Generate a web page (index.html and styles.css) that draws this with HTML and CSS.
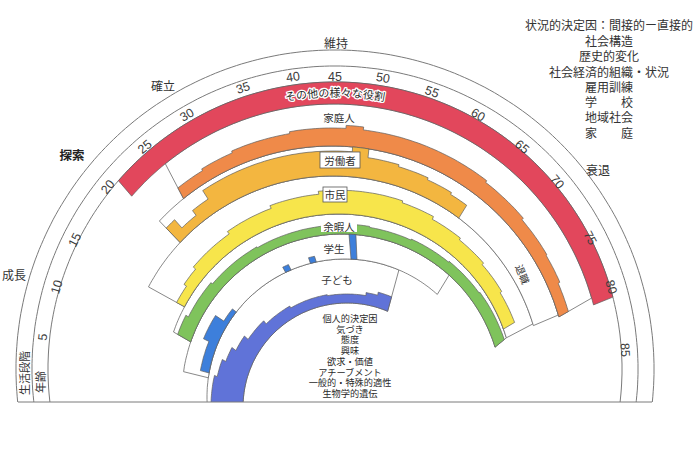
FILE: index.html
```html
<!DOCTYPE html>
<html lang="ja">
<head>
<meta charset="utf-8">
<title>ライフ・キャリア・レインボー</title>
<link rel="stylesheet" href="styles.css">
</head>
<body>
<div class="page">
<svg id="rainbow" class="chart" width="700" height="453" viewBox="0 0 700 453">
  <defs>
    <clipPath id="clipBase"><rect x="0" y="0" width="700" height="402"/></clipPath>
    <path id="redArc" d="M179,146 A272,272 0 0 1 491,146"/>
  </defs>
  <g id="scale" clip-path="url(#clipBase)"></g>
  <g id="outlines" clip-path="url(#clipBase)"></g>
  <g id="fills" clip-path="url(#clipBase)"></g>
  <line class="base-line" x1="18" y1="402" x2="652" y2="402"/>

  <g class="ages">
    <text x="43" y="337" transform="rotate(-83.7 43 337)">5</text>
    <text x="57" y="287" transform="rotate(-73.6 57 287)">10</text>
    <text x="75" y="240" transform="rotate(-63.6 75 240)">15</text>
    <text x="108" y="187" transform="rotate(-51.3 108 187)">20</text>
    <text x="145" y="147" transform="rotate(-40.6 145 147)">25</text>
    <text x="187" y="115" transform="rotate(-30.2 187 115)">30</text>
    <text x="243" y="88" transform="rotate(-18.1 243 88)">35</text>
    <text x="293" y="77" transform="rotate(-8.2 293 77)">40</text>
    <text x="335" y="77">45</text>
    <text x="383" y="78" transform="rotate(9.4 383 78)">50</text>
    <text x="432" y="92" transform="rotate(19.3 432 92)">55</text>
    <text x="478" y="115" transform="rotate(29.4 478 115)">60</text>
    <text x="522" y="147" transform="rotate(40.1 522 147)">65</text>
    <text x="557" y="182" transform="rotate(49.9 557 182)">70</text>
    <text x="590" y="238" transform="rotate(62.8 590 238)">75</text>
    <text x="611" y="287" transform="rotate(73.5 611 287)">80</text>
    <text x="625" y="350" transform="rotate(86.3 625 350)">85</text>
  </g>

  <g class="stages">
    <text x="336" y="42">維持</text>
    <text x="163" y="85">確立</text>
    <text class="stage-strong" x="72" y="154">探索</text>
    <text x="14" y="274">成長</text>
    <text x="598" y="169">衰退</text>
  </g>

  <g class="axis-labels">
    <text x="24" y="373" transform="rotate(-90 24 373)">生活段階</text>
    <text x="40" y="382" transform="rotate(-90 40 382)">年齢</text>
  </g>

  <text class="red-label"><textPath href="#redArc" startOffset="50%">その他の様々な役割</textPath></text>

  <g class="role-labels">
    <text x="339" y="117">家庭人</text>
    <rect class="label-box boxed" x="320" y="152" width="40" height="16"/>
    <text x="340" y="160">労働者</text>
    <rect class="label-box boxed" x="323" y="187" width="24" height="15"/>
    <text x="335" y="194.5">市民</text>
    <rect class="label-box" x="321" y="219" width="36" height="13"/>
    <text x="339" y="226">余暇人</text>
    <rect class="label-box" x="322" y="242" width="25" height="12"/>
    <text x="334" y="248">学生</text>
    <text x="337" y="279">子ども</text>
    <text class="retire" x="523" y="274" transform="rotate(68 523 274)">退職</text>
  </g>

  <g class="personal">
    <text x="350" y="319">個人的決定因</text>
    <text x="350" y="329.7">気づき</text>
    <text x="350" y="340.4">態度</text>
    <text x="350" y="351.1">興味</text>
    <text x="350" y="361.8">欲求・価値</text>
    <text x="350" y="372.5">アチーブメント</text>
    <text x="350" y="383.2">一般的・特殊的適性</text>
    <text x="350" y="393.9">生物学的遺伝</text>
  </g>

  <g class="situational">
    <text x="609" y="26">状況的決定因：間接的ー直接的</text>
    <text x="609" y="41.5">社会構造</text>
    <text x="609" y="57">歴史的変化</text>
    <text x="609" y="72.5">社会経済的組織・状況</text>
    <text x="609" y="88">雇用訓練</text>
    <text x="609" y="103">学　　校</text>
    <text x="609" y="118">地域社会</text>
    <text x="609" y="134">家　　庭</text>
  </g>
</svg>
</div>
<script src="script.js"></script>
</body>
</html>
```

FILE: styles.css
```css
html, body {
  margin: 0;
  padding: 0;
  background: #ffffff;
}

.page {
  width: 700px;
  height: 453px;
  overflow: hidden;
}

.chart {
  display: block;
}

.scale-line {
  fill: none;
  stroke: #7a7a7a;
  stroke-width: 1;
}

.base-line {
  stroke: #7a7a7a;
  stroke-width: 1;
}

.outline {
  fill: #ffffff;
  stroke: #6a6a6a;
  stroke-width: 0.8;
}

.band {
  stroke: #5e5e5e;
  stroke-width: 0.7;
  stroke-linejoin: miter;
}

.red { fill: #e2475c; }
.orange { fill: #ef8a49; }
.worker { fill: #f3b640; }
.citizen { fill: #f7e54b; }
.leisure { fill: #7fc35c; }
.student { fill: #3d7fdb; }
.child { fill: #6073d8; }

.ages text {
  font-family: "Liberation Sans", Arial, sans-serif;
  font-size: 12.5px;
  fill: #3c3c3c;
  text-anchor: middle;
  dominant-baseline: central;
}

.stages text,
.axis-labels text,
.role-labels text,
.red-label {
  font-family: "Noto Sans CJK JP", "Noto Sans", sans-serif;
  text-anchor: middle;
  dominant-baseline: central;
}

.stages text {
  font-size: 12px;
  fill: #333333;
}

.stages .stage-strong {
  font-size: 12.5px;
  font-weight: 700;
  fill: #222222;
}

.axis-labels text {
  font-size: 11px;
  fill: #333333;
}

.red-label {
  font-size: 11px;
  fill: #2a2a2a;
  stroke: #ffffff;
  stroke-width: 2.6px;
  paint-order: stroke;
  stroke-linejoin: round;
  dominant-baseline: auto;
}

.role-labels text {
  font-size: 10.5px;
  fill: #333333;
}

.role-labels .retire {
  font-size: 10px;
}

.label-box {
  fill: #ffffff;
  stroke: none;
}

.label-box.boxed {
  stroke: #555555;
  stroke-width: 0.8;
}

.personal text {
  font-family: "Liberation Sans", "Noto Sans CJK JP", sans-serif;
  font-size: 9.2px;
  fill: #2a2a2a;
  text-anchor: middle;
  dominant-baseline: central;
}

.situational text {
  font-family: "Liberation Sans", "Noto Sans CJK JP", sans-serif;
  font-size: 12px;
  fill: #333333;
  text-anchor: middle;
  dominant-baseline: central;
}
```

FILE: script.js
```js
(function () {
  var NS = 'http://www.w3.org/2000/svg';
  // edges: [centerX, centerY, radius]
  var E = {
    e0: [335, 369, 319],
    e1: [335, 369, 303],
    e2: [335, 369, 287],
    e3: [334, 372, 268],
    e4: [332, 382, 236],
    e5: [333, 385, 209],
    e6: [339, 389, 175],
    e7: [342, 394, 160],
    e8: [345, 397, 138],
    e9: [347, 407, 104]
  };

  function pt(e, th) {
    var c = E[e], a = th * Math.PI / 180;
    return [c[0] - c[2] * Math.cos(a), c[1] - c[2] * Math.sin(a)];
  }
  function ptT(i, o, th, t) {
    var p = pt(i, th), q = pt(o, th);
    var w = Math.hypot(q[0] - p[0], q[1] - p[1]);
    var f = Math.min(1, t / w);
    return [p[0] + (q[0] - p[0]) * f, p[1] + (q[1] - p[1]) * f];
  }
  function range(a, b) {
    var r = [], n = Math.max(1, Math.ceil(Math.abs(b - a)));
    for (var k = 0; k <= n; k++) r.push(a + (b - a) * k / n);
    return r;
  }
  function poly(points, close) {
    return 'M' + points.map(function (p) {
      return p[0].toFixed(1) + ',' + p[1].toFixed(1);
    }).join('L') + (close ? 'Z' : '');
  }
  function add(g, d, cls) {
    var p = document.createElementNS(NS, 'path');
    p.setAttribute('d', d);
    p.setAttribute('class', cls);
    g.appendChild(p);
  }
  function arc(e, a, b) {
    return poly(range(a, b).map(function (t) { return pt(e, t); }), false);
  }
  function band(i, o, a, b) {
    var pts = range(a, b).map(function (t) { return pt(i, t); });
    range(b, a).forEach(function (t) { pts.push(pt(o, t)); });
    return poly(pts, true);
  }
  function fill(i, o, prof) {
    var a = prof[0][0], b = prof[prof.length - 1][1];
    var pts = range(a, b).map(function (t) { return pt(i, t); });
    for (var k = prof.length - 1; k >= 0; k--) {
      var s = prof[k];
      range(s[1], s[0]).forEach(function (t) { pts.push(ptT(i, o, t, s[2])); });
    }
    return poly(pts, true);
  }

  var gScale = document.getElementById('scale');
  var gOut = document.getElementById('outlines');
  var gFill = document.getElementById('fills');

  ['e0', 'e1', 'e2'].forEach(function (e) { add(gScale, arc(e, -12, 192), 'scale-line'); });

  // role outlines (white areas)
  add(gOut, band('e9', 'e8', -8, 113), 'outline');
  add(gOut, band('e8', 'e7', 8, 132), 'outline');
  add(gOut, band('e7', 'e6', 19, 163), 'outline');
  add(gOut, band('e6', 'e5', 28, 163), 'outline');
  add(gOut, band('e5', 'e4', 43, 163.5), 'outline');
  add(gOut, band('e4', 'e3', 51, 164), 'outline');

  // その他の様々な役割
  add(gFill, fill('e3', 'e2', [[41, 165.5, 99]]), 'band red');
  // 家庭人
  add(gFill, fill('e4', 'e3', [[51, 58, 12], [58, 66, 14], [66, 80, 16], [80, 93, 18], [93, 97, 21], [97, 128, 18], [128, 140, 16], [140, 150, 14], [150, 157, 13], [157, 164, 11]]), 'band orange');
  // 労働者
  add(gFill, fill('e5', 'e4', [[43, 46, 20], [46, 51, 9], [51, 56, 15], [56, 95, 25], [95, 99, 99], [99, 107, 21], [107, 115, 19], [115, 122, 17], [122, 127, 15]]), 'band worker');
  // 市民
  add(gFill, fill('e6', 'e5', [[28, 34, 9], [34, 40, 12], [40, 55, 15], [55, 70, 18], [70, 85, 21], [85, 110, 24], [110, 120, 22], [120, 130, 19], [130, 140, 17], [140, 150, 15], [150, 160, 13]]), 'band citizen');
  // 余暇人
  add(gFill, fill('e7', 'e6', [[19, 26, 15], [26, 40, 12], [40, 60, 10], [60, 85, 9], [85, 100, 10], [100, 115, 9], [115, 130, 10], [130, 145, 11], [145, 163, 12]]), 'band leisure');
  // 学生
  add(gFill, fill('e8', 'e7', [[10, 22, 9], [22, 32, 15], [32, 38, 5]]), 'band student');
  add(gFill, fill('e8', 'e7', [[64.5, 67, 6]]), 'band student');
  add(gFill, fill('e8', 'e7', [[75.5, 78, 6]]), 'band student');
  add(gFill, fill('e8', 'e7', [[92.5, 95, 99]]), 'band student');
  // 子ども
  add(gFill, fill('e9', 'e8', [[-8, 10, 33], [10, 18, 30], [18, 25, 26], [25, 33, 21], [33, 45, 16], [45, 60, 12], [60, 80, 10], [80, 100, 9], [100, 106, 12], [106, 113, 15]]), 'band child');
})();
```
